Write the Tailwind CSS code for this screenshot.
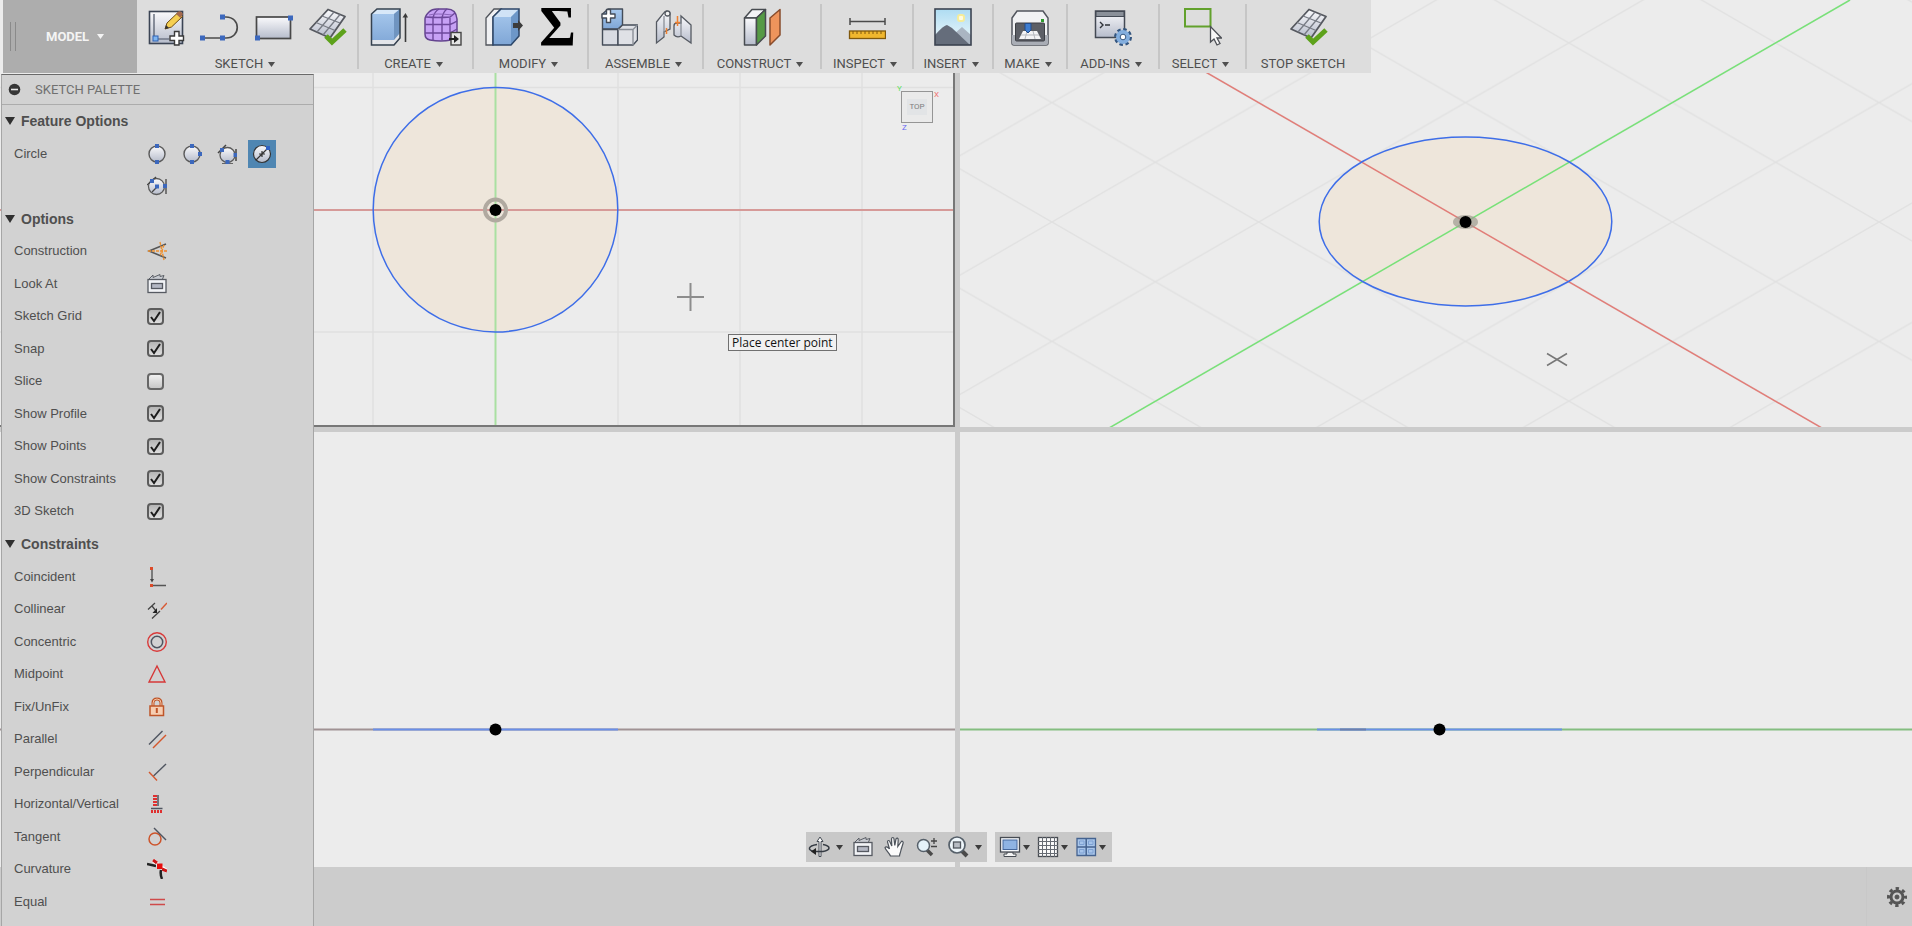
<!DOCTYPE html>
<html lang="en">
<head>
    <meta charset="UTF-8">
    <meta name="viewport" content="width=device-width, initial-scale=1.0">
    <title>Sketch</title>
    <script src="https://cdn.jsdelivr.net/npm/@tailwindcss/browser@4"></script>
</head>
<body class="h-screen overflow-hidden bg-[#cccccc] font-[Roboto,'Liberation_Sans',sans-serif] text-[13px] leading-4 text-[#4f4f4f]">

    <!-- shared shapes -->
    <svg class="absolute h-0 w-0">
        <defs>
            <linearGradient id="metal" x1="0" y1="0" x2="0" y2="1"><stop offset="0" stop-color="#fafafc"/><stop offset="1" stop-color="#b6bccb"/></linearGradient>
            <linearGradient id="blue" x1="0" y1="0" x2="0" y2="1"><stop offset="0" stop-color="#a9caee"/><stop offset="1" stop-color="#7fa6d6"/></linearGradient>
            <linearGradient id="sky" x1="0" y1="0" x2="0" y2="1"><stop offset="0" stop-color="#aedcf2"/><stop offset="1" stop-color="#f2fafc"/></linearGradient>
            <symbol id="caret" viewBox="0 0 7 5"><path d="M0 0H7L3.5 5Z" fill="currentColor"/></symbol>
            <symbol id="gridcheck" viewBox="0 0 38 38">
                <path d="M19 1.5L36 8.5L21 30L1 21Z" fill="url(#metal)" stroke="#55585f" stroke-width="1.8" stroke-linejoin="round"/>
                <path d="M13 8L31 15M7 14.5L26 22.5M25 4L8 24M31 6.5L14 27" stroke="#777b84" stroke-width="1.3" fill="none"/>
                <path d="M17 28L23 34L36 22" fill="none" stroke="#5da21b" stroke-width="5"/>
            </symbol>
            <symbol id="lookat" viewBox="0 0 20 20">
                <path d="M2 5L6 1V3.5L13 .5V2.500L17 1.5L15.5 5" fill="#c9ccd2" stroke="#5b5f66"/>
                <rect x="1" y="5.5" width="18" height="13" fill="#f1f3f6" stroke="#565a62" stroke-width="1.3"/>
                <rect x="4.5" y="9.5" width="11" height="5" fill="#b4b8c4" stroke="#565a62" stroke-width="1.3"/>
            </symbol>
            <symbol id="tick" viewBox="0 0 17 17"><path d="M4 9L7 13L13 4" fill="none" stroke="#1d1d1d" stroke-width="2"/></symbol>
        </defs>
    </svg>

    <div class="relative flex h-full flex-col">

        <!-- four viewports -->
        <main class="relative grid flex-1 grid-cols-[955fr_952fr] grid-rows-[427fr_435fr] gap-[5px] bg-[#cbcbcb]">
            <section class="relative overflow-hidden border-r-2 border-b-2 border-[#777777] bg-[#ececec]">
                <svg class="absolute inset-0 h-full w-full" fill="none">
                    <path d="M373 0V427M618 0V427M740 0V427M862 0V427M0 87.5H955M0 332H955" stroke="#e0e0e0" stroke-width="1.5"/>
                    <circle cx="495.5" cy="209.7" r="122.3" fill="#eee6db"/>
                    <path d="M495.5 0V427" stroke="#a9e0a2" stroke-width="2"/>
                    <path d="M0 210H955" stroke="#d69a98" stroke-width="2"/>
                    <circle cx="495.5" cy="209.7" r="122.3" stroke="#3e6ee8" stroke-width="1.5"/>
                    <circle cx="495.5" cy="210" r="10.5" stroke="#b0a9a0" stroke-width="4"/>
                    <circle cx="495.5" cy="210" r="6" fill="#000"/>
                    <path d="M677 297H704M690.5 283V311" stroke="#8d8d8d" stroke-width="2"/>
                </svg>
                <!-- view cube -->
                <div class="absolute top-[91px] right-5 flex h-8 w-8 items-center justify-center border border-[#959595] bg-[#eaeaea]">
                    <span class="bg-[#e2e4e6] px-[2px] text-[8px] text-[#808080]">TOP</span>
                    <span class="absolute -top-[7px] -left-[5px] text-[8px] leading-2 text-[#5fe05f]">Y</span>
                    <span class="absolute -top-px -right-[7px] text-[8px] leading-2 text-[#f07070]">X</span>
                    <span class="absolute top-[32px] left-0 text-[8px] leading-2 text-[#6868f4]">Z</span>
                </div>
                <div class="absolute top-[334px] left-[728px] border border-[#707070] bg-[#f1f1f1] px-[3px] font-['Open_Sans',sans-serif] text-[12px] leading-[15px] text-[#111]">Place center point</div>
            </section>

            <section class="relative overflow-hidden bg-[#ececec]">
                <svg class="absolute inset-0 h-full w-full" fill="none">
                    <defs>
                        <pattern id="iso" width="206.8" height="119.4" patternUnits="userSpaceOnUse" patternTransform="translate(505.5 222)">
                            <path d="M0 0L206.8 119.4M0 119.4L206.8 0" stroke="#e1e1e1" stroke-width="1.5"/>
                        </pattern>
                    </defs>
                    <rect width="100%" height="100%" fill="url(#iso)"/>
                    <ellipse cx="505.5" cy="221.5" rx="146.3" ry="84.5" fill="#eee6db"/>
                    <path d="M121 0L887 442.5" stroke="#e17d78" stroke-width="1.5"/>
                    <path d="M124 442.5L890 0" stroke="#78e178" stroke-width="1.5"/>
                    <ellipse cx="505.5" cy="221.5" rx="146.3" ry="84.5" stroke="#3e6ee8" stroke-width="1.5"/>
                    <ellipse cx="505.5" cy="222" rx="12.5" ry="7" fill="#9d9a90" opacity=".7"/>
                    <circle cx="505.5" cy="222" r="6" fill="#000"/>
                    <path d="M587 353.500L607 365.5M587 365.5L607 353.5" stroke="#777" stroke-width="1.5"/>
                </svg>
            </section>

            <section class="relative overflow-hidden bg-[#ececec]">
                <svg class="absolute inset-0 h-full w-full" fill="none">
                    <path d="M0 297.5H955" stroke="#a09294" stroke-width="2"/>
                    <path d="M373 297.5H618" stroke="#6a8fe8" stroke-width="2"/>
                    <circle cx="495.5" cy="297.5" r="6" fill="#000"/>
                </svg>
            </section>

            <section class="relative overflow-hidden bg-[#ececec]">
                <svg class="absolute inset-0 h-full w-full" fill="none">
                    <path d="M0 297.5H2400" stroke="#84bd80" stroke-width="2"/>
                    <path d="M357 297.5H602" stroke="#6a8fe8" stroke-width="2"/>
                    <path d="M380 297.5H406" stroke="#6d7fb0" stroke-width="2"/>
                    <circle cx="479.5" cy="297.5" r="6" fill="#000"/>
                </svg>
            </section>

            <!-- navigation bar -->
            <nav class="absolute inset-x-0 bottom-[5px] flex justify-center gap-2 pl-[6px] text-[#3c3c3c]">
                <div class="flex h-[30px] items-center gap-2 bg-[#c8c8c8] pr-[5px] pl-[2px]">
                    <button aria-label="Orbit" class="flex items-center gap-1">
                        <svg class="h-6 w-6" viewBox="0 0 24 24" fill="none">
                            <path d="M9 9.500C0 11 -1 15 6 16.500" stroke="#343a42" stroke-width="1.5"/>
                            <path d="M11 21.5V6.500H9L12 2L15 6.5H13V21.5Z" fill="#fff" stroke="#444b54"/>
                            <path d="M15 9.5C23 11 23 15 15 16.5H6" stroke="#343a42" stroke-width="1.5"/>
                            <path d="M8 13L3 16.5L8 20Z" fill="#222"/>
                        </svg>
                        <svg class="h-[5px] w-[7px]"><use href="#caret"/></svg>
                    </button>
                    <button aria-label="Look at"><svg class="h-5 w-6"><use href="#lookat"/></svg></button>
                    <button aria-label="Pan">
                        <svg class="h-6 w-6" viewBox="0 0 24 24">
                            <path d="M7.5 21C6 17.5 2 14.5 2 12.5C3 11 5.5 12.5 6.5 14L4.5 7C4.5 5 6.5 5 7 7L8.8 11L8.5 4C8.7 2 10.8 2 11 4L11.8 10.5L13 4C13.5 2.3 15.5 3 15.2 5L14.8 11.5L18 7C19 5.500 20.8 6.5 20 8.5L18 15C17.5 18 16.5 19 16.5 21Z" fill="#fbfbfb" stroke="#4d535b" stroke-width="1.2"/>
                        </svg>
                    </button>
                    <button aria-label="Zoom">
                        <svg class="h-6 w-6" viewBox="0 0 24 24" fill="none">
                            <path d="M12 15L17 20" stroke="#4a4a4a" stroke-width="3.5"/>
                            <circle cx="8.5" cy="10.5" r="6" fill="#e4f2fa" stroke="#56606a" stroke-width="1.5"/>
                            <path d="M16 6H22M19 3V9M16 11.5H22" stroke="#444" stroke-width="1.3"/>
                        </svg>
                    </button>
                    <button aria-label="Fit" class="flex items-center gap-1">
                        <svg class="h-6 w-6" viewBox="0 0 24 24" fill="none">
                            <path d="M14 15L20 21" stroke="#4a4a4a" stroke-width="4"/>
                            <circle cx="10" cy="10" r="8" fill="#eef6fb" stroke="#56606a" stroke-width="1.7"/>
                            <rect x="6.5" y="7" width="7" height="6" fill="#b7bcc4" stroke="#50565e" stroke-width="1.3"/>
                        </svg>
                        <svg class="h-[5px] w-[7px]"><use href="#caret"/></svg>
                    </button>
                </div>
                <div class="flex h-[30px] items-center gap-[6px] bg-[#c8c8c8] pr-[6px] pl-[3px]">
                    <button aria-label="Display settings" class="flex items-center gap-px">
                        <svg class="h-6 w-6" viewBox="0 0 24 24">
                            <path d="M9 17H15V19H18V21.5H6V19H9Z" fill="#f5f5f5" stroke="#474c53"/>
                            <rect x="2.5" y="2.5" width="19" height="14.5" fill="#f5f7fa" stroke="#474c53" stroke-width="1.3"/>
                            <rect x="5" y="5" width="14" height="9.5" fill="#8fb4e3" stroke="#46689c"/>
                        </svg>
                        <svg class="h-[5px] w-[7px]"><use href="#caret"/></svg>
                    </button>
                    <button aria-label="Grid and snaps" class="flex items-center gap-px">
                        <svg class="h-6 w-6" viewBox="0 0 24 24">
                            <rect x="2.5" y="2.5" width="19" height="19" fill="#fafafa" stroke="#484c52" stroke-width="1.3"/>
                            <path d="M6.5 2V22M10.5 2V22M14.5 2V22M18.5 2V22M2 6.5H22M2 10.5H22M2 14.5H22M2 18.5H22" stroke="#666b73"/>
                        </svg>
                        <svg class="h-[5px] w-[7px]"><use href="#caret"/></svg>
                    </button>
                    <button aria-label="Viewports" class="flex items-center gap-px">
                        <svg class="h-6 w-6" viewBox="0 0 24 24" fill="#a6c4ea" stroke="#456390">
                            <path d="M3 3.5H21.5V20.5H3Z" fill="#a9c6ea" stroke-width="1.3"/>
                            <path d="M3 12H21.5M12.2 3.5V20.5" stroke-width="1.5"/>
                            <path d="M5.5 6H10V9.5H5.5ZM14.5 6H19V9.5H14.5ZM5.5 14.5H10V18H5.5ZM14.5 14.5H19V18H14.5Z" stroke="#7ea1d3"/>
                        </svg>
                        <svg class="h-[5px] w-[7px]"><use href="#caret"/></svg>
                    </button>
                </div>
            </nav>
        </main>

        <footer class="flex h-[59px] items-center justify-end bg-[#cccccc]">
            <button aria-label="Settings" class="border-l border-[#c8c8c8] py-5 pr-[5px] pl-[20px]">
                <svg class="h-[20px] w-[20px]" viewBox="0 0 20 20" fill="none" stroke="#555">
                    <circle cx="10" cy="10" r="6" stroke-width="3"/>
                    <circle cx="10" cy="10" r="8.5" stroke-width="3" stroke-dasharray="3.34 3.34" stroke-dashoffset="1.67"/>
                    <circle cx="10" cy="10" r="2" fill="#555" stroke-width="1"/>
                </svg>
            </button>
        </footer>

        <!-- toolbar -->
        <header class="absolute top-0 left-0 flex h-[73px] border-l-[3px] border-[#ececec] bg-[#dddddd]">
            <button class="flex w-[134px] items-center bg-[#adadad] pl-[7px] font-bold text-[#f4f4f4]">
                <span class="h-[29px] w-[6px] border-x border-[#8a8a8a]"></span>
                <span class="ml-[30px]">MODEL</span>
                <svg class="ml-2 h-[5px] w-[7px]"><use href="#caret"/></svg>
            </button>

            <div class="flex w-[220px] flex-col items-center pt-2">
                <div class="flex gap-4">
                    <button aria-label="Create sketch"><svg class="h-[38px] w-[38px]" viewBox="0 0 38 38">
                        <rect x="2.5" y="3.5" width="33" height="32" fill="url(#metal)" stroke="#3b4454" stroke-width="1.6"/>
                        <path d="M7 6V30M8 31H22" stroke="#4a5364" stroke-width="1.2"/>
                        <rect x="6" y="28" width="5" height="5" fill="#7eb5f0" stroke="#2f62b5"/>
                        <path d="M18 21L20 15L31 4.5L35.5 8.5L24.5 19Z" fill="#f5cf52" stroke="#6d4b14"/>
                        <path d="M29 6L31.5 3.5Q34 2.5 36 6L33.5 10Z" fill="#a56a4e"/>
                        <path d="M18 21L19 17L22 20Z" fill="#333"/>
                        <path d="M27.5 23.5H32V28H36.5V32.5H32V37H27.5V32.5H23V28H27.5Z" fill="#fff" stroke="#3a3a3a" stroke-width="1.4"/>
                    </svg></button>
                    <button aria-label="Line"><svg class="h-[38px] w-[38px] overflow-visible" viewBox="0 0 38 38">
                        <path d="M1 30H25C40 30 40 9 25 9H21" fill="none" stroke="#4b4b4b" stroke-width="1.7"/>
                        <path d="M-1 27.500H4V32.5H-1ZM19 27.5H24V32.5H19ZM19 6.5H24V11.5H19Z" fill="#3c68bd"/>
                    </svg></button>
                    <button aria-label="Rectangle"><svg class="h-[38px] w-[38px]" viewBox="0 0 38 38">
                        <rect x="1.5" y="9" width="34" height="21.5" fill="url(#metal)" stroke="#484848" stroke-width="1.7"/>
                        <path d="M33 7.5H38V12.5H33ZM0 27.5H5V32.5H0Z" fill="#3c68bd"/>
                    </svg></button>
                    <button aria-label="Finish sketch"><svg class="h-[38px] w-[38px]"><use href="#gridcheck"/></svg></button>
                </div>
                <button class="mt-[10px] flex items-center gap-[5px] pr-1">SKETCH <svg class="h-[5px] w-[7px]"><use href="#caret"/></svg></button>
            </div>

            <div class="my-1 w-[2px] bg-[#c6c6c6]"></div>
            <div class="flex w-[113px] flex-col items-center pt-2">
                <div class="flex gap-4">
                    <button aria-label="Extrude"><svg class="h-[38px] w-[38px]" viewBox="0 0 38 38">
                        <path d="M1.5 6L7 1H30V30L24 37H1.5Z" fill="url(#blue)"/>
                        <path d="M1.5 6L7 1H30L24 6Z" fill="#d8e8f8"/>
                        <path d="M24 6L30 1V30L24 37Z" fill="#6f94c0"/>
                        <path d="M1.5 32H24L30 25V30L24 37H1.5Z" fill="#e3e5e9"/>
                        <path d="M1.5 6L7 1H30V30L24 37H1.5Z" fill="none" stroke="#35414f" stroke-width="1.5"/>
                        <path d="M35.5 34V8" stroke="#3a3a3a" stroke-width="1.6"/><path d="M32.5 9.5L35.5 5L38 9.5Z" fill="#3a3a3a"/>
                    </svg></button>
                    <button aria-label="Create form"><svg class="h-[38px] w-[38px]" viewBox="0 0 38 38" fill="none">
                        <path d="M1 11Q1 8 5 4Q8 1 13 1H23Q32 1 33 11V25Q32 30 27 32Q17 34 6 32Q1 31 1 26Z" fill="#c7a1f5" stroke="#64448f" stroke-width="1.5"/>
                        <path d="M2 9Q14 10 26 9Q31 5 31 5M1 16.5H26Q30 15 33 13M1 25H26L33 21M9 32V10Q10 4 15 1M18 32V10Q19 4 23 1M26 32V10" stroke="#6d489b" stroke-width="1.4"/>
                        <path d="M5 7Q12 5 28 7" stroke="#8b65ba"/>
                        <rect x="27" y="24.5" width="10" height="12.5" fill="#e5e5e5" stroke="#444" stroke-width="1.4"/>
                        <path d="M25 31H31" stroke="#222" stroke-width="2"/><path d="M30 27L35 31L30 35Z" fill="#222"/>
                    </svg></button>
                </div>
                <button class="mt-[10px] flex items-center gap-[5px] pr-1">CREATE <svg class="h-[5px] w-[7px]"><use href="#caret"/></svg></button>
            </div>

            <div class="my-1 w-[2px] bg-[#c6c6c6]"></div>
            <div class="flex w-[113px] flex-col items-center pt-2">
                <div class="flex gap-4">
                    <button aria-label="Press pull"><svg class="h-[38px] w-[38px]" viewBox="0 0 38 38">
                        <path d="M1 10L9 1H16L8 9V37H1Z" fill="#f0f1f3" stroke="#50545b" stroke-width="1.3"/>
                        <path d="M8 9L16 1H34V28L26 37H8Z" fill="url(#blue)"/>
                        <path d="M8 9L16 1H34L26 9Z" fill="#d1e3f6"/>
                        <path d="M26 9L34 1V28L26 37Z" fill="#6d97c8"/>
                        <path d="M8 9L16 1H34V28L26 37H8Z" fill="none" stroke="#2c4668" stroke-width="1.5"/>
                        <path d="M28 15H33V12L38 17.5L33 23V20H28Z" fill="#3c3c3c"/>
                    </svg></button>
                    <button aria-label="Parameters" class="flex h-[38px] w-[38px] items-center justify-center font-['Liberation_Serif',serif] text-[56px] leading-[38px] font-bold text-black">Σ</button>
                </div>
                <button class="mt-[10px] flex items-center gap-[5px] pr-1">MODIFY <svg class="h-[5px] w-[7px]"><use href="#caret"/></svg></button>
            </div>

            <div class="my-1 w-[2px] bg-[#c6c6c6]"></div>
            <div class="flex w-[113px] flex-col items-center pt-2">
                <div class="flex gap-4">
                    <button aria-label="New component"><svg class="h-[38px] w-[38px]" viewBox="0 0 38 38" stroke="#444c58" stroke-width="1.4" stroke-linejoin="round">
                        <path d="M2.5 6L8 1H22.5V17L18 21H2.5Z" fill="url(#blue)"/>
                        <path d="M2.5 21.5H18V37H2.5Z" fill="#d8dbe2"/>
                        <path d="M18 21.5L22.5 17H37.5V32L33 37H18Z" fill="#dfe1e6"/>
                        <path d="M18 21.5H33V37M33 21.5L37.5 17" fill="none" stroke="#8b9098"/>
                        <path d="M6.5 1.5H10.5V6H15V10H10.5V14.5H6.5V10H2V6H6.5Z" fill="#fff"/>
                    </svg></button>
                    <button aria-label="Joint"><svg class="h-[38px] w-[38px]" viewBox="0 0 38 38" stroke="#555a62" stroke-width="1.3">
                        <path d="M2.5 14L9 6Q12 1 16 5V21L10 24V29L2.5 35Z" fill="url(#metal)"/>
                        <path d="M10 8V28" stroke="#8b9098"/>
                        <circle cx="13.5" cy="5.5" r="2.5" fill="#f3f3f3"/>
                        <path d="M37 17L27 8V15H23Q20 15 20 18V27Q23 30 27 28L37 35Z" fill="url(#metal)"/>
                        <path d="M27 10V28" stroke="#8b9098"/>
                        <path d="M12.5 20V26M23.5 8V18M21 14.5H26" fill="none" stroke="#ef8030" stroke-width="1.5"/>
                    </svg></button>
                </div>
                <button class="mt-[10px] flex items-center gap-[5px] pr-1">ASSEMBLE <svg class="h-[5px] w-[7px]"><use href="#caret"/></svg></button>
            </div>

            <div class="my-1 w-[2px] bg-[#c6c6c6]"></div>
            <div class="flex w-[116px] flex-col items-center pt-2">
                <button aria-label="Offset plane"><svg class="h-[38px] w-[38px]" viewBox="0 0 38 38" stroke="#474b50" stroke-width="1.5" stroke-linejoin="round">
                    <path d="M1.5 10L9 1.5H22.5L13.5 10Z" fill="#f4f4f6"/>
                    <path d="M1.5 10H13.5V37H1.5Z" fill="url(#metal)"/>
                    <path d="M13.5 10L22.5 1.5V28L13.5 37Z" fill="#559a45"/>
                    <path d="M27 10L37 1.5V27L27 37Z" fill="#ee945c" stroke="#884c2c"/>
                </svg></button>
                <button class="mt-[10px] flex items-center gap-[5px] pr-1">CONSTRUCT <svg class="h-[5px] w-[7px]"><use href="#caret"/></svg></button>
            </div>

            <div class="my-1 w-[2px] bg-[#c6c6c6]"></div>
            <div class="flex w-[90px] flex-col items-center pt-2">
                <button aria-label="Measure"><svg class="h-[38px] w-[38px]" viewBox="0 0 38 38">
                    <path d="M2 13.5H37M2 10V17M37 10V17" stroke="#4b4b4b" stroke-width="1.5"/>
                    <rect x="1.5" y="23" width="36" height="7.5" fill="#f0b72e" stroke="#80590d" stroke-width="1.3"/>
                    <path d="M5 23V26M9 23V26M13 23V26M17 23V26M21 23V26M25 23V26M29 23V26M33 23V26" stroke="#80590d"/>
                </svg></button>
                <button class="mt-[10px] flex items-center gap-[5px] pr-1">INSPECT <svg class="h-[5px] w-[7px]"><use href="#caret"/></svg></button>
            </div>

            <div class="my-1 w-[2px] bg-[#c6c6c6]"></div>
            <div class="flex w-[78px] flex-col items-center pt-2">
                <button aria-label="Insert canvas"><svg class="h-[38px] w-[38px]" viewBox="0 0 38 38">
                    <rect x="1" y="1" width="36" height="36" fill="url(#sky)"/>
                    <rect x="24" y="7" width="6" height="6" rx="2" fill="#fffbe0" stroke="#f5ec9a" stroke-width="2"/>
                    <path d="M20 26L28 19L37 27V37H20Z" fill="#aab5c2"/>
                    <path d="M1 27Q10 17 13 17L18 20L36 37H1Z" fill="#656d7b"/>
                    <rect x="1" y="1" width="36" height="36" fill="none" stroke="#3b4350" stroke-width="1.6"/>
                </svg></button>
                <button class="mt-[10px] flex items-center gap-[5px] pr-1">INSERT <svg class="h-[5px] w-[7px]"><use href="#caret"/></svg></button>
            </div>

            <div class="my-1 w-[2px] bg-[#c6c6c6]"></div>
            <div class="flex w-[72px] flex-col items-center pt-2">
                <button aria-label="3D print"><svg class="h-[38px] w-[38px]" viewBox="0 0 38 38">
                    <path d="M1 10L6 3H32L37 10V35Q37 37 35 37H3Q1 37 1 35Z" fill="#f1f2f4" stroke="#52565e" stroke-width="1.5"/>
                    <path d="M1 27H37V35Q37 37 35 37H3Q1 37 1 35Z" fill="#a9adb5"/>
                    <rect x="4.5" y="15" width="29" height="18" rx="1" fill="#5c5f66" stroke="#3c3f44"/>
                    <path d="M12 23H26L30 31H8Z" fill="#f4f4f6"/><path d="M10 27H28M16 23L14 31M22 23L24 31" stroke="#b5b8be"/>
                    <path d="M14 15.500H20V22L17 25L14 22Z" fill="#3e7dd0" stroke="#234d8b"/>
                    <rect x="30" y="11" width="3" height="3" fill="#2d9a2d"/>
                </svg></button>
                <button class="mt-[10px] flex items-center gap-[5px] pr-1">MAKE <svg class="h-[5px] w-[7px]"><use href="#caret"/></svg></button>
            </div>

            <div class="my-1 w-[2px] bg-[#c6c6c6]"></div>
            <div class="flex w-[90px] flex-col items-center pt-2">
                <button aria-label="Scripts and add-ins"><svg class="h-[38px] w-[38px]" viewBox="0 0 38 38" fill="none">
                    <rect x="1.5" y="3" width="29" height="26.5" fill="url(#metal)" stroke="#444a54" stroke-width="1.5"/>
                    <path d="M2 3.500H30V8.5H2Z" fill="#8a9099" stroke="#444a54"/>
                    <path d="M6 14L9 17L6 20M11 17H16" stroke="#30343a" stroke-width="1.4"/>
                    <circle cx="29" cy="29" r="7.5" stroke="#33557f" stroke-width="3" stroke-dasharray="3.4 2.49"/>
                    <circle cx="29" cy="29" r="5" fill="#fff" stroke="#83aede" stroke-width="4"/>
                    <circle cx="29" cy="29" r="2.8" stroke="#33557f"/>
                </svg></button>
                <button class="mt-[10px] flex items-center gap-[5px] pr-1">ADD-INS <svg class="h-[5px] w-[7px]"><use href="#caret"/></svg></button>
            </div>

            <div class="my-1 w-[2px] bg-[#c6c6c6]"></div>
            <div class="flex w-[85px] flex-col items-center pt-2">
                <button aria-label="Select"><svg class="h-[38px] w-[38px]" viewBox="0 0 38 38">
                    <rect x="1" y="1" width="25.5" height="17.5" fill="none" stroke="#62a12c" stroke-width="2"/>
                    <path d="M26.5 18.5V34L30 31L33 37L36 35.5L33 30H37.5Z" fill="#f7f7f7" stroke="#4c4f55" stroke-width="1.3"/>
                </svg></button>
                <button class="mt-[10px] flex items-center gap-[5px] pr-1">SELECT <svg class="h-[5px] w-[7px]"><use href="#caret"/></svg></button>
            </div>

            <div class="my-1 w-[2px] bg-[#c6c6c6]"></div>
            <button class="flex w-[124px] flex-col items-center pt-2">
                <svg class="h-[38px] w-[38px]"><use href="#gridcheck"/></svg>
                <span class="mt-[10px] pr-3">STOP SKETCH</span>
            </button>
        </header>

        <!-- sketch palette -->
        <aside class="absolute top-[74px] bottom-0 left-px flex w-[313px] flex-col border-x border-t border-[#a6a6a6] border-t-[#6a6a6a] bg-[#d2d2d2]">
            <div class="flex h-[30px] shrink-0 items-center gap-[14px] border-b border-[#acacac] pl-[6px] text-[#707070]">
                <button aria-label="Collapse"><svg class="h-[13px] w-[13px]" viewBox="0 0 13 13"><circle cx="6.5" cy="6.5" r="5.8" fill="#363636"/><path d="M3 6.5H10" stroke="#e8e8e8" stroke-width="1.6"/></svg></button>
                <h2>SKETCH PALETTE</h2>
            </div>
            <div class="grid flex-1 auto-rows-fr pb-2 font-['Liberation_Sans',sans-serif]">
                <h3 class="flex items-center gap-[6px] pl-[3px] text-[14px] font-bold"><svg class="h-2 w-[10px]" viewBox="0 0 10 8"><path d="M0 0H10L5 8Z" fill="#303030"/></svg>Feature Options</h3>
                <div class="row-span-2 grid grid-cols-[125px_140px] pl-3">
                    <span class="grid grid-rows-2 items-center">Circle</span>
                    <div class="grid grid-cols-4 grid-rows-2 place-items-center">
                        <button aria-label="2-point circle" class="p-1"><svg class="h-5 w-5" viewBox="0 0 20 20"><circle cx="10" cy="10" r="8" fill="url(#metal)" stroke="#5a5a5a" stroke-width="1.4"/><path d="M8 0H12V4H8ZM8 16H12V20H8Z" fill="#3c68bd"/></svg></button>
                        <button aria-label="3-point circle" class="p-1"><svg class="h-5 w-5" viewBox="0 0 20 20"><circle cx="10" cy="10" r="8" fill="url(#metal)" stroke="#5a5a5a" stroke-width="1.4"/><path d="M8 0H12V4H8ZM8 16H12V20H8ZM16 8H20V12H16Z" fill="#3c68bd"/></svg></button>
                        <button aria-label="3-tangent circle" class="p-1"><svg class="h-5 w-5" viewBox="0 0 20 20"><circle cx="10.5" cy="11" r="7.5" fill="url(#metal)" stroke="#5a5a5a" stroke-width="1.3"/><path d="M1 9L9 1M19 5V17M5 20H16" stroke="#444" stroke-width="1.5"/><path d="M3 4H7V8H3ZM16.5 9H20V13H16.5ZM8.5 16H12.5V20H8.5Z" fill="#3c68bd"/></svg></button>
                        <button aria-label="Center diameter circle" class="bg-[#4f86b2] p-1"><svg class="h-5 w-5" viewBox="0 0 20 20"><circle cx="10" cy="10" r="8.5" fill="url(#metal)" stroke="#333" stroke-width="1.2"/><path d="M4 16L16 4M7 10H13M10 7V13" stroke="#333" stroke-width="1.2"/><path d="M14 2H18V6H14Z" fill="#2f62c4"/></svg></button>
                        <button aria-label="2-tangent circle" class="p-1"><svg class="h-5 w-5" viewBox="0 0 20 20"><circle cx="9.5" cy="10.5" r="8" fill="url(#metal)" stroke="#5a5a5a" stroke-width="1.3"/><path d="M0 9L9 1M19 3V18M5 16L10 11" stroke="#444" stroke-width="1.3"/><path d="M3 3H7V7H3ZM16 8H20V12H16ZM8 8.5H12V12.5H8Z" fill="#3c68bd"/></svg></button>
                    </div>
                </div>
                <h3 class="flex items-center gap-[6px] pl-[3px] text-[14px] font-bold"><svg class="h-2 w-[10px]" viewBox="0 0 10 8"><path d="M0 0H10L5 8Z" fill="#303030"/></svg>Options</h3>
                <button class="grid grid-cols-[133px_20px] items-center pl-3 text-left">Construction
                    <svg class="h-5 w-5" viewBox="0 0 20 20" fill="none"><path d="M19 3L2 10L19 17" stroke="#555" stroke-width="1.6"/><path d="M1 10H20M13 1L17 19M17 4L13 15" stroke="#ef9130" stroke-width="1.4" stroke-dasharray="3 1"/></svg></button>
                <button class="grid grid-cols-[133px_20px] items-center pl-3 text-left">Look At
                    <svg class="h-5 w-5"><use href="#lookat"/></svg></button>
                <label class="grid grid-cols-[133px_17px] items-center pl-3">Sketch Grid
                    <span class="grid"><input type="checkbox" checked class="peer [grid-area:1/1] h-[17px] w-[17px] appearance-none rounded-[4px] border-2 border-[#5c5c5c] bg-linear-to-b from-[#b5b5b5] to-[#dedede]"><svg class="invisible [grid-area:1/1] h-[17px] w-[17px] peer-checked:visible"><use href="#tick"/></svg></span></label>
                <label class="grid grid-cols-[133px_17px] items-center pl-3">Snap
                    <span class="grid"><input type="checkbox" checked class="peer [grid-area:1/1] h-[17px] w-[17px] appearance-none rounded-[4px] border-2 border-[#5c5c5c] bg-linear-to-b from-[#b5b5b5] to-[#dedede]"><svg class="invisible [grid-area:1/1] h-[17px] w-[17px] peer-checked:visible"><use href="#tick"/></svg></span></label>
                <label class="grid grid-cols-[133px_17px] items-center pl-3">Slice
                    <span class="grid"><input type="checkbox" class="peer [grid-area:1/1] h-[17px] w-[17px] appearance-none rounded-[4px] border-2 border-[#666666] bg-linear-to-b from-[#f0f0f0] to-[#c8c8c8]"><svg class="invisible [grid-area:1/1] h-[17px] w-[17px] peer-checked:visible"><use href="#tick"/></svg></span></label>
                <label class="grid grid-cols-[133px_17px] items-center pl-3">Show Profile
                    <span class="grid"><input type="checkbox" checked class="peer [grid-area:1/1] h-[17px] w-[17px] appearance-none rounded-[4px] border-2 border-[#5c5c5c] bg-linear-to-b from-[#b5b5b5] to-[#dedede]"><svg class="invisible [grid-area:1/1] h-[17px] w-[17px] peer-checked:visible"><use href="#tick"/></svg></span></label>
                <label class="grid grid-cols-[133px_17px] items-center pl-3">Show Points
                    <span class="grid"><input type="checkbox" checked class="peer [grid-area:1/1] h-[17px] w-[17px] appearance-none rounded-[4px] border-2 border-[#5c5c5c] bg-linear-to-b from-[#b5b5b5] to-[#dedede]"><svg class="invisible [grid-area:1/1] h-[17px] w-[17px] peer-checked:visible"><use href="#tick"/></svg></span></label>
                <label class="grid grid-cols-[133px_17px] items-center pl-3">Show Constraints
                    <span class="grid"><input type="checkbox" checked class="peer [grid-area:1/1] h-[17px] w-[17px] appearance-none rounded-[4px] border-2 border-[#5c5c5c] bg-linear-to-b from-[#b5b5b5] to-[#dedede]"><svg class="invisible [grid-area:1/1] h-[17px] w-[17px] peer-checked:visible"><use href="#tick"/></svg></span></label>
                <label class="grid grid-cols-[133px_17px] items-center pl-3">3D Sketch
                    <span class="grid"><input type="checkbox" checked class="peer [grid-area:1/1] h-[17px] w-[17px] appearance-none rounded-[4px] border-2 border-[#5c5c5c] bg-linear-to-b from-[#b5b5b5] to-[#dedede]"><svg class="invisible [grid-area:1/1] h-[17px] w-[17px] peer-checked:visible"><use href="#tick"/></svg></span></label>
                <h3 class="flex items-center gap-[6px] pl-[3px] text-[14px] font-bold"><svg class="h-2 w-[10px]" viewBox="0 0 10 8"><path d="M0 0H10L5 8Z" fill="#303030"/></svg>Constraints</h3>
                <button class="grid grid-cols-[133px_20px] items-center pl-3 text-left">Coincident
                    <svg class="h-5 w-5" viewBox="0 0 20 20"><path d="M5 3V14M6 18.5H19" stroke="#555" stroke-width="1.4"/><path d="M3 12H7L5 15.5Z" fill="#444"/><path d="M3 0H6V3H3ZM3 17H6V20H3Z" fill="#dc4a28"/></svg></button>
                <button class="grid grid-cols-[133px_20px] items-center pl-3 text-left">Collinear
                    <svg class="h-5 w-5" viewBox="0 0 20 20"><path d="M1 10.5L8 4M5 19.5L13 12M5 7L9 12" stroke="#444" stroke-width="1.3"/><path d="M10 9V14H5.5Z" fill="#222"/><path d="M14 10.5L20 4" stroke="#d85a35" stroke-width="1.5"/></svg></button>
                <button class="grid grid-cols-[133px_20px] items-center pl-3 text-left">Concentric
                    <svg class="h-5 w-5" viewBox="0 0 20 20" fill="none"><circle cx="10" cy="10" r="9.3" stroke="#d93a3a" stroke-width="1.4"/><circle cx="10" cy="10" r="5.7" stroke="#4f5560" stroke-width="1.5"/></svg></button>
                <button class="grid grid-cols-[133px_20px] items-center pl-3 text-left">Midpoint
                    <svg class="h-5 w-5" viewBox="0 0 20 20"><path d="M10 2L18 18H2Z" fill="none" stroke="#d63838" stroke-width="1.4"/></svg></button>
                <button class="grid grid-cols-[133px_20px] items-center pl-3 text-left">Fix/UnFix
                    <svg class="h-5 w-5" viewBox="0 0 20 20"><path d="M6 9V6Q6 2 10 2Q14 2 14 6V9" fill="none" stroke="#bf5528" stroke-width="3"/><path d="M6 9V6Q6 2 10 2Q14 2 14 6V9" fill="none" stroke="#f4c4a4"/><rect x="3" y="9" width="13.5" height="9.5" fill="#f6ceb2" stroke="#bf5528" stroke-width="1.5"/><path d="M9.8 11V16" stroke="#bf5528" stroke-width="2"/></svg></button>
                <button class="grid grid-cols-[133px_20px] items-center pl-3 text-left">Parallel
                    <svg class="h-5 w-5" viewBox="0 0 20 20"><path d="M2 15.5L15.5 2" stroke="#4f5560" stroke-width="1.4"/><path d="M6 19L19 6" stroke="#d4572c" stroke-width="1.4"/></svg></button>
                <button class="grid grid-cols-[133px_20px] items-center pl-3 text-left">Perpendicular
                    <svg class="h-5 w-5" viewBox="0 0 20 20"><path d="M6.5 14L19 2" stroke="#4f5560" stroke-width="1.4"/><path d="M2 10L10 18.5" stroke="#d4572c" stroke-width="1.4"/></svg></button>
                <button class="grid grid-cols-[133px_20px] items-center pl-3 text-left">Horizontal/Vertical
                    <svg class="h-5 w-5" viewBox="0 0 20 20"><path d="M11 1V12M4 14.5H15.5" stroke="#4f5560" stroke-width="1.5"/><path d="M8 1V12" stroke="#df3030" stroke-width="4" stroke-dasharray="2 1"/><path d="M4 17.5H15.5" stroke="#df3030" stroke-width="3" stroke-dasharray="2 1"/></svg></button>
                <button class="grid grid-cols-[133px_20px] items-center pl-3 text-left">Tangent
                    <svg class="h-5 w-5" viewBox="0 0 20 20" fill="none"><circle cx="8" cy="12" r="6" stroke="#cd542b" stroke-width="1.5"/><path d="M7 1L19 13" stroke="#4f5560" stroke-width="1.4"/></svg></button>
                <button class="grid grid-cols-[133px_20px] items-center pl-3 text-left">Curvature
                    <svg class="h-5 w-5" viewBox="0 0 20 20" fill="none"><path d="M6 1L12 7L20 12" stroke="#fff" stroke-width="4"/><path d="M6 1L10 4M15 10L20 12" stroke="#cc1616" stroke-width="3"/><path d="M0 5L9 7M14 11Q13 15 15 20" stroke="#222" stroke-width="2.5"/><rect x="10" y="4.5" width="5.5" height="5.5" fill="#e60d0d"/></svg></button>
                <button class="grid grid-cols-[133px_20px] items-center pl-3 text-left">Equal
                    <svg class="h-5 w-5" viewBox="0 0 20 20"><path d="M3 7.5H18M3 12.5H18" stroke="#cf4a4a" stroke-width="1.6"/></svg></button>
            </div>
        </aside>
    </div>
</body>
</html>
